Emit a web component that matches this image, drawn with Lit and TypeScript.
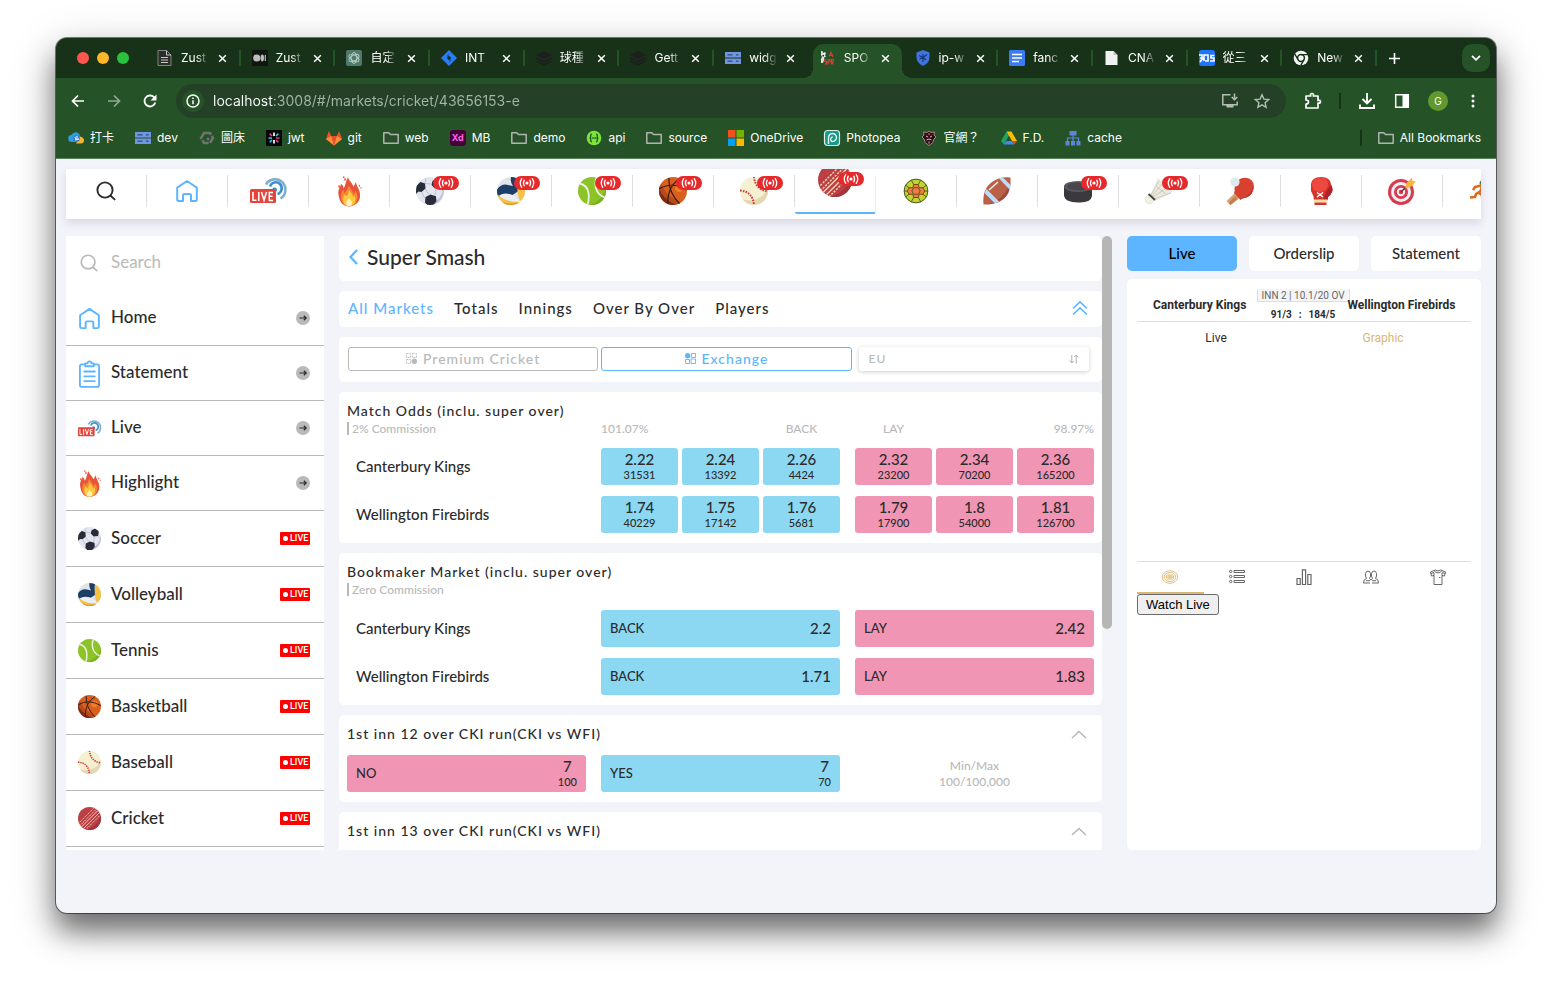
import { LitElement, html, css, svg, nothing } from "lit";
import { customElement } from "lit/decorators.js";
import { classMap } from "lit/directives/class-map.js";

/* ---------- icon artwork ---------- */

const icon = (box: string, body: unknown) => html`<svg viewBox=${box} aria-hidden="true">${body}</svg>`;

const clipBall = (id: string, body: unknown) => svg`
  <clipPath id=${id}><circle cx="14" cy="14" r="14"/></clipPath>
  <g clip-path="url(#${id})">${body}</g>`;

const sportArt: Record<string, () => unknown> = {
  search: () => icon("0 0 20 20", svg`<g fill="none" stroke="currentColor" stroke-width="1.9" stroke-linecap="round">
    <circle cx="9" cy="9" r="7.6"/><path d="M14.6 14.8l4 3.6"/></g>`),
  home: () => icon("0 0 24 24", svg`<path fill="none" stroke="#5eb5ff" stroke-width="2" stroke-linejoin="round"
    d="M2.2 8.6L12 2l9.800 6.600V20.500q0 1.500-1.500 1.500h-4.300v-5.500q0-1.500-1.500-1.500h-5q-1.500 0-1.500 1.500V22H3.700q-1.500 0-1.500-1.500z"/>`),
  statement: () => icon("0 0 24 30", svg`<g fill="none" stroke="#5eb5ff" stroke-width="1.9" stroke-linecap="round" stroke-linejoin="round">
    <path d="M7 4.500H4q-2 0-2 2V26q0 2 2 2h16q2 0 2-2V6.500q0-2-2-2h-3"/><path d="M7.500 6.500v-3h2.500a2 2 0 0 1 4 0h2.500v3z"/>
    <path d="M6.500 12h11M6.500 17h11M6.500 22h11"/></g>`),
  live: () => icon("0 0 36 26", svg`<g fill="none" stroke-width="2.600" stroke-linecap="butt">
    <path stroke="#7fb0cd" d="M16 6.500A10.400 10.400 0 1 1 30.500 20.500"/>
    <path stroke="#3f8fd0" d="M20 8.500A6 6 0 1 1 27.500 16"/></g><circle cx="24.600" cy="12" r="2.400" fill="#3f8fd0"/>
    <rect x="0" y="11" width="26" height="14" rx="1.500" fill="#e5443a"/>
    <g fill="none" stroke="#fff" stroke-width="1.500"><path d="M3 14v8.300h3.500M8.800 14v9M11.500 14l2.500 8.300L16.500 14M23 14.500h-3.700v8h3.700M19.300 18.200h3.200"/></g>`),
  fire: () => icon("0 0 26 31", svg`<path fill="#e8543a" d="M3 21C1 14 4 12 5 8c2 1 2.500 3 2.500 4.500C10 9 9.500 5 12 1c.5 4 4 5 5.500 9.500C19 9 19 7 20 6c0 4 5 8 4 15-1 6-6 9.500-11 9.500S4 27 3 21z"/>
    <path fill="#f58a35" d="M5 22c-.500-4 1-6 2-8 1 1 1.500 2 1.500 3.500 2-2 3-5 4.500-8 1 4 4 5 4.500 9 1-1 1.500-2 2-3.500 2 3 2.500 6 1.500 9-1 4-4 6-8 6s-7.500-3-8-8z"/>
    <path fill="#fdc93c" d="M7 24c0-3 1-4 2-5.500l1.500 2C12 19 12.500 17 13 14c2 3 3.500 4 4 7l1.500-1.500c1 2 1 3 .8 4.500-.5 4-3 6-6.300 6s-5.700-2-6-6z"/>
    <path fill="#fff3b8" d="M10 27c0-2 2-2.500 3-5 1.500 2.500 3 3 3 5s-1 3-3 3-3-1-3-3z"/>
    <path fill="#e8543a" d="M2 10l1.500-1 .5 2-1 1zM8 3l1.300-1.300.7 2L8.700 5zM22.500 9.500l1-1 .7 1.500-1 1zM7 .5h1.500V2H7zM24.500 11h1v1.500h-1z"/>`),
  soccer: () => icon("0 0 28 28", clipBall("so", svg`<rect width="28" height="28" fill="#e3e5ef"/>
    <path fill="#c3c7d8" d="M28 9v19H8c11 0 18-7 20-19z"/>
    <path fill="#262c38" d="M16.500 4l4.500-2.200 4.500 3.200-1 6-5.500.5-3.500-3.500zM0 9l4.500-4 4.500 1.500.5 5-4 3.500-3-.5L0 17zM9.500 20l5-2.500 5.500 1.800.5 5-4 4.700h-4.500l-3-3.500z"/>
    <path fill="none" stroke="#b4b9cb" stroke-width=".8" d="M9 6.500L16 7M9 12l4 5.500M20 11.500l-1 7M24.500 11l3 4M5.500 15l3 6M20.500 24l4-2M9 6l1-5"/>`)),
  volleyball: () => icon("0 0 28 28", clipBall("vo", svg`<rect width="28" height="28" fill="#dfe3ea"/>
    <path fill="#1d3e66" d="M14 0h7q-1.500 6 .5 14l-6 4Q10 16 1 20L-1 14q5-8 12-6l5 1Q13 5 14 0z"/>
    <path fill="#f7c244" d="M21 0l8 4v16l-6 4q-4-8-2-24zM1 18q8 7 21 7l1 5H0z"/>
    <path fill="#eceef2" d="M2 18.500q6-3.500 13-.5 6 2.500 7.500 6.500Q9 25 2 18.500z"/>
    <path fill="#d99d2d" d="M5 25q9 3 16 .3l1 3.300H7z"/>`)),
  tennis: () => icon("0 0 28 28", clipBall("te", svg`<rect width="28" height="28" fill="#8cc327"/>
    <path fill="#7bb01f" d="M28 8v20H10c10-2 17-9 18-20z"/>
    <g fill="none" stroke="#eef0e2" stroke-width="1.800"><path d="M1 6.500q8 1 9.500 9.500.8 6-1 12"/><path d="M19.500-1q-4 7-.5 15 3.500 6 9 6.500"/></g>`)),
  basketball: () => icon("0 0 28 28", clipBall("ba", svg`<rect width="28" height="28" fill="#d9601c"/>
    <path fill="#7d2c1c" d="M0 8q3 11 10 15 5 3 8 6H0z"/><path fill="#b64a1b" d="M2 6q4 11 12 15 6 3 8 6l-5 1Q4 22 0 12z"/>
    <circle cx="20" cy="11" r="4" fill="#ee7e27"/>
    <g fill="none" stroke="#3a1c14" stroke-width="1.200"><path d="M0 12Q13 4 28 13M10 1q-1 14 11 26M22 1Q8 9 9 27"/></g>`)),
  baseball: () => icon("0 0 28 28", clipBall("bb", svg`<rect width="28" height="28" fill="#f6f0d2"/>
    <path fill="#e2d9b3" d="M28 10v18H0v-6q22 5 28-12z"/>
    <g fill="none" stroke="#cf3a3c" stroke-width="2" stroke-dasharray="1.600 1.200"><path d="M0 13.500q13 1 14 15"/><path d="M14-.500q1 13 14 15"/></g>`)),
  cricket: () => icon("0 0 28 28", clipBall("cr", svg`<rect width="28" height="28" fill="#ba4045"/>
    <path fill="#a5343a" d="M28 8v20H8q17-3 20-20z"/>
    <g stroke="#f3cfae" stroke-width="1.200"><path d="M4 24.500L24.500 4M6.500 26.500L26.500 6.500"/>
    <path stroke-dasharray="1.800 1" d="M0 20.500L19.500 1M2 23L22.500 2.500M9 28L28 9"/></g>`)),
  handball: () => icon("0 0 28 28", svg`<circle cx="14" cy="14" r="12.800" fill="#c3d42e" stroke="#3c4a1c" stroke-width="1"/>
    <path fill="#f47c43" stroke="#5c3a1c" stroke-width=".9" d="M11.500 7h5l1 3.500h4l2 3.500-2 3.500h-4l-1 3.500h-5l-1-3.500h-4L4.500 14l2-3.500h4z"/>
    <path fill="none" stroke="#3c4a1c" stroke-width=".9" d="M11.500 10.500h5l2 3.500-2 3.500h-5l-2-3.500zM11.500 7L9 2.500M16.500 7L19 2.500M21.500 10.500l4-3M23.500 14h3.300M21.500 17.500l4 3M16.500 21l2.500 4.500M11.500 21L9 25.500M6.500 17.500l-4 3M4.500 14H1.200M6.500 10.500l-4-3"/>`),
  football: () => icon("0 0 28 28", svg`<path fill="#b96048" d="M.5 27.500Q-1 12 9 5 17-1 27.500.500 29 12 20 20 12 28 .5 27.500z"/>
    <path fill="#9c4b3a" d="M1 27.500q17-1 26.500-21-1 21-26.500 21z"/>
    <path fill="#b9ddfa" d="M1.500 16l2-4L16 24.500l-4 2zM16 1.500l4-1L28 8.500l-1.500 4z"/>
    <path stroke="#e9eef4" stroke-width="1.500" d="M6 13L15 5"/>`),
  puck: () => icon("0 0 28 28", svg`<path fill="#3b383e" d="M0 9v10q1 6 14 6.500T28 19V9z"/><ellipse cx="14" cy="9.500" rx="14" ry="5.500" fill="#5a565e"/>
    <ellipse cx="14" cy="9.500" rx="11" ry="3.800" fill="#49454d"/>`),
  shuttle: () => icon("0 0 28 28", svg`<path fill="#eceadf" d="M5 18L13 1l3 3 1.500-2 1 5 5-1-.5 4 5-.5-2 4 2 .5-2 2-16 8z"/>
    <path fill="none" stroke="#c5c2b4" stroke-width=".8" d="M6 18l8-14M7 19L18 6M8 20l15-10M9 22l17-6M12 10l9 7"/>
    <circle cx="4.500" cy="22.500" r="4.200" fill="#f3f1e4" stroke="#d7d3bf" stroke-width=".6"/><path stroke="#424242" stroke-width="1.800" d="M3.500 17l6.500 6"/>`),
  pingpong: () => icon("0 0 28 28", svg`<path fill="#d9a273" d="M9 16l4.500 5-9 7L.500 24z"/><path fill="#be8254" d="M9 19l2.500 3.500L4.500 28l-2-2z"/>
    <path fill="#d8402f" d="M10 5Q16-1 23 1.500q6 3 4.500 10.500-2 8-9 9-3 .500-4 2L8 16q1-2 .5-5z"/><path fill="#b5302a" d="M27.500 8q-1 11-13 13.500l-.5 1.500 1.500-1.500q10-1 12-9.500z"/>
    <circle cx="9" cy="5" r="4.600" fill="#dfe9ed"/>`),
  boxing: () => icon("0 0 28 28", svg`<path fill="#d8322d" d="M4 7Q5 0 14 0t10 7l1 3q2 5-4 10l-.5 3H7q0-4-3-9z"/>
    <path fill="#ec4a40" d="M5 8q0-7 9-7 7 0 7 6-1 8-8 8-7 0-8-7z"/><path fill="#ae2227" d="M24 8l1 2q2 5-4 10l-.5 3h-4q1-7 7.500-15z"/>
    <path stroke="#fff" stroke-width="1.500" d="M10 15.500l6 4.500M16 15.500L10 20"/><path fill="#f6e0a4" d="M7 22.500h13.500v3H7z"/><path fill="#d8322d" d="M7.500 25.500h12V28h-12z"/>`),
  darts: () => icon("0 0 28 28", svg`<circle cx="13" cy="15" r="13" fill="#d83b4f"/><circle cx="13" cy="15" r="10" fill="#f2eef3"/>
    <circle cx="13" cy="15" r="7" fill="#d83b4f"/><circle cx="13" cy="15" r="4.200" fill="#f2eef3"/><circle cx="13" cy="15" r="2.200" fill="#d83b4f"/>
    <path stroke="#5b3b3b" stroke-width="1.200" d="M13 15l6-6"/><path fill="#f5b43c" d="M17 11.500L18.500 6 24 .500l.5 3.500 3.500.5L22.500 10z"/>`),
  runner: () => icon("0 0 28 28", svg`<circle cx="13" cy="6" r="2.500" fill="#3a7d4e"/><path fill="none" stroke="#e06a1c" stroke-width="2.600" stroke-linejoin="round"
    d="M12 8.500l-6 1.500-2 3M12 8.500q1.500 3-1 6l-4 2.500-1 3-5 .5M10 16l3 2 .5 5"/>`),
};

const broadcast = () => icon("0 0 20 12", svg`<circle cx="10" cy="6" r="2" fill="#fff"/>
  <g fill="none" stroke="#fff" stroke-width="1.600" stroke-linecap="round"><path d="M6.600 2.500q-2.200 3.500 0 7M13.400 2.500q2.200 3.500 0 7M3.400.5q-3.600 5.500 0 11M16.600.5q3.600 5.500 0 11"/></g>`);

const folder = () => icon("0 0 16 16", svg`<path fill="none" stroke="#b3b3b3" stroke-width="1.500" stroke-linejoin="round" d="M.8 13.300V2.800h5L7.500 4.500h7.700v8.800z"/>`);
const server = () => icon("0 0 16 16", svg`<path fill="#7096e0" d="M0 2h16v5.600H0zM0 8.400h16V14H0z"/><path stroke="#2b4c86" stroke-width="1.300" d="M2.500 4.800h5M2.500 11.200h5M11 4.800h2.500M11 11.200h2.500"/>`);
const layers = () => icon("0 0 16 16", svg`<path fill="#1c1f1d" d="M8 1l8 4-8 4-8-4z"/><path fill="none" stroke="#1c1f1d" stroke-width="1.800" d="M.5 8L8 11.800 15.500 8M.5 11L8 14.800 15.500 11"/>`);

const tabArt: Record<string, () => unknown> = {
  doc: () => icon("0 0 16 16", svg`<path fill="#2a2f2b" stroke="#8d8d8d" stroke-width=".9" d="M1 .500h8.500L14 5v10.500H1z"/><path fill="none" stroke="#c9c9c9" d="M9.500.500V5H14M4 7.500h7M4 10h7M4 12.500h7"/>`),
  medium: () => icon("0 0 16 16", svg`<rect width="16" height="16" rx="1" fill="#10150f"/><circle cx="4.800" cy="8" r="3.600" fill="#b9beb8"/><ellipse cx="10.300" cy="8" rx="1.700" ry="3.400" fill="#b9beb8"/><rect x="12.700" y="5" width="1.200" height="6" fill="#b9beb8"/>`),
  gpt: () => icon("0 0 16 16", svg`<rect width="16" height="16" rx="2" fill="#4f7a6b"/><g fill="none" stroke="#b9cfc6" stroke-width=".9"><ellipse cx="8" cy="8" rx="2.800" ry="5.500"/><ellipse cx="8" cy="8" rx="2.800" ry="5.500" transform="rotate(60 8 8)"/><ellipse cx="8" cy="8" rx="2.800" ry="5.500" transform="rotate(120 8 8)"/></g>`),
  jira: () => icon("0 0 16 16", svg`<path fill="#2a7df5" d="M8 0l8 8-8 8-8-8z"/><path fill="#1a5fd0" d="M8 3l-3 3 3 2.500V5.800zM8 13l3-3-3-2v2.200z"/><path fill="#183219" d="M8 5.800L10.200 8 8 10.200 5.800 8z"/>`),
  layers, server,
  spo: () => icon("0 0 16 16", svg`<path fill="#dfe5df" d="M1 1h1.500l.5 2 2-1 1 1.500-1 2 1.500 1-2 .5-.5 3L3 13H1V9l1-2-1-2z"/><path fill="#242c24" d="M2.500 5H4v1.500H2.500z"/><path fill="none" stroke="#e2392d" stroke-width="1.200" d="M9 6.500l2-4 2 4.500M9.500 5.500h3M6.500 9.500H4.800v2h1.700V14H4.500M8 14.500v-5h2v2.300H8M11.500 14.500v-5h1.800v2.200l-1.500.3 1.700 2.500"/>`),
  shield: () => icon("0 0 16 16", svg`<path fill="#3f73dd" d="M8 0l6.500 2.500V7q0 6-6.500 9-6.500-3-6.500-9V2.500z"/><path fill="none" stroke="#16357c" stroke-width="1.100" d="M4 5.500l4 2 4-3M4.500 9L8 7.500 11 10M8 4v8"/>`),
  gdoc: () => icon("0 0 16 16", svg`<rect width="16" height="16" rx="1.500" fill="#3b7bf6"/><path stroke="#fff" stroke-width="1.600" d="M3 4.500h10M3 8h10M3 11.500h7"/>`),
  page: () => icon("0 0 16 16", svg`<path fill="#f1f1f1" d="M1.500 1h8l4 4v10h-12z"/><path fill="#bdbdbd" d="M9.500 1l4 4h-4z"/>`),
  pic: () => icon("0 0 16 16", svg`<rect width="16" height="16" rx="2.500" fill="#1e74fa"/><path fill="none" stroke="#fff" stroke-width="1.600" d="M0 5h3v3H1M5 11V5h4v6H6M15.500 5.500H12V8h3v3h-4M1 12l3-4"/>`),
  chrome: () => icon("0 0 16 16", svg`<circle cx="8" cy="8" r="7.300" fill="#f5f5f5"/><circle cx="8" cy="8" r="3.400" fill="none" stroke="#183219" stroke-width="1.500"/><path stroke="#183219" stroke-width="1.400" d="M8 4.600h7M5 9.700L1.800 4M11 9.700L7.800 15.300"/>`),
};

const markArt: Record<string, () => unknown> = {
  cloud: () => icon("0 0 16 16", svg`<path fill="#2aa0e8" d="M4 12a3.500 3.500 0 0 1-.5-7Q6 1 10 3q2 1 2 4l-2 5z"/><path fill="#f6b62e" d="M8 13.500l4-7q3.500.500 4 3.500 0 3.500-3.500 3.500z"/><circle cx="8.500" cy="8.500" r="3.300" fill="#3678c9"/><path fill="none" stroke="#fff" d="M10 7.200q-3-1-3 .5t3 1.300-3 1"/>`),
  server, folder,
  hex: () => icon("0 0 16 16", svg`<path fill="none" stroke="#6d736d" stroke-width="2.600" d="M5 3h6l3 5-3 5H5L2 8z" stroke-dasharray="8 1.500"/><circle cx="9" cy="9" r="1.500" fill="#6d736d"/>`),
  jwt: () => icon("0 0 16 16", svg`<rect width="16" height="16" fill="#060606"/><g stroke-width="1.700"><path stroke="#fff" d="M8 2.500V6M8 10v3.500"/><path stroke="#31c3e8" d="M10 6l2.300-2.300M6 10l-2.300 2.300M2.500 8H6"/><path stroke="#e0338c" d="M10 8h3.500M10 10l2.300 2.300M6 6L3.700 3.700"/></g>`),
  gitlab: () => icon("0 0 16 16", svg`<path fill="#e8512c" d="M0 9l2.800-8L5.300 6h5.400l2.500-5L16 9l-8 6.500z"/><path fill="#f79336" d="M0 9l5.300-3L8 15.500zM16 9l-5.300-3L8 15.500z"/><path fill="#e8512c" d="M5.300 6h5.400L8 15.500z"/>`),
  xd: () => html`<span class="xd">Xd</span>`,
  api: () => icon("0 0 16 16", svg`<circle cx="8" cy="8" r="7.300" fill="#7be33a"/><g fill="none" stroke="#17451f" stroke-width="1.200"><path d="M6 4Q4.500 4 4.800 6 5 8 3.500 8 5 8 4.800 10 4.500 12 6 12M10 4q1.500 0 1.200 2Q11 8 12.500 8 11 8 11.200 10q.3 2-1.200 2M6 8h4.500"/></g>`),
  ms: () => icon("0 0 16 16", svg`<path fill="#f1511b" d="M0 0h7.500v7.500H0z"/><path fill="#73b200" d="M8.500 0H16v7.500H8.500z"/><path fill="#05a0f0" d="M0 8.500h7.500V16H0z"/><path fill="#fdb900" d="M8.500 8.500H16V16H8.500z"/>`),
  pea: () => icon("0 0 16 16", svg`<rect x=".5" y=".5" width="15" height="15" rx="3" fill="#159a86" stroke="#dcefe9" stroke-width="1.200"/><path fill="none" stroke="#e6f5f1" stroke-width="1.400" d="M4.500 14V8a4 4 0 1 1 4 3.500q-2 0-1.800-2.500Q7 7 8.800 7"/>`),
  crest: () => icon("0 0 16 16", svg`<path fill="#2a1216" stroke="#c4989b" stroke-width=".8" d="M8 1l2 1.500 3.500-.5-.5 3 2 2-2 2q0 4-5 6.500Q3 13 3 9L1 7l2-2-.5-3L6 2.500z"/><path fill="none" stroke="#d9b6b8" d="M5 6l2 1M11 6L9 7M5.500 10q2.500-2 5 0M8 11.500v2"/><path fill="#b92d3a" d="M7 3h2v2H7z"/>`),
  drive: () => icon("0 0 16 16", svg`<path fill="#1fa463" d="M5.500 1.500L0 11l2.700 3.500L8 5.500z"/><path fill="#fbbc04" d="M5.500 1.500h5L16 11h-5z"/><path fill="#4285f4" d="M5 11l-2.300 3.500h10.600L11 11z"/><path fill="#ea4335" d="M11 11h5l-2.700 3.500z"/>`),
  tree: () => icon("0 0 16 16", svg`<path fill="#5b86dd" d="M4.500 1h7v4.500h-7zM.5 11h4v4.500h-4zM6 11h4v4.500H6zM11.500 11h4v4.500h-4z"/><path fill="none" stroke="#5b86dd" stroke-width="1.200" d="M8 5v6M2.500 11V8h11v3"/>`),
};

const closeX = () => icon("0 0 10 10", svg`<path stroke="#fff" stroke-width="1.700" d="M1.300 1.300l7.400 7.400M8.700 1.300L1.300 8.700"/>`);
const chevUp = () => icon("0 0 16 9", svg`<path fill="none" stroke="#b8b8b8" stroke-width="1.500" d="M1 8l7-6.500L15 8"/>`);

/* ---------- shared styles ---------- */

const base = css`
  :host, *, *::before, *::after { box-sizing: border-box; }
  :host { display: block; font-family: Lato, "Open Sans", sans-serif; color: #2b2b2b; }
  button, input, select { font: inherit; letter-spacing: inherit; color: inherit; border: 0; background: none; padding: 0; margin: 0; }
  a { color: inherit; text-decoration: none; }
  svg { display: block; width: 100%; height: 100%; overflow: visible; }
  h1, h2, p, ul { margin: 0; padding: 0; font-weight: inherit; list-style: none; }
`;

/* ---------- browser frame ---------- */

@customElement("browser-bar")
class BrowserBar extends LitElement {
  static styles = [base, css`
    :host { font-family: Inter, "Noto Sans CJK TC", sans-serif; font-size: 12px; color: #fff; background: #255227; border-bottom: 1px solid #5c845d; }
    .strip { display: flex; align-items: stretch; height: 40px; background: #183219; }
    .lights { display: flex; align-items: center; gap: 8px; width: 90px; padding-left: 21px; }
    .light { width: 12px; height: 12px; border-radius: 50%; }
    .red { background: #ff5750; } .amber { background: #fdb72b; } .green { background: #28c23c; }
    .tabs { flex: 1; display: flex; min-width: 0; }
    .tab { flex: 1 1 0; min-width: 0; display: flex; align-items: center; padding-left: 11px; position: relative; }
    .tab::after { content: ""; position: absolute; right: 0; top: 12px; width: 2px; height: 16px; background: #255227; }
    .tab.pre::after { display: none; }
    .tab.on::before { content: ""; position: absolute; inset: 6px 2px 0 4px; background: #255227; border-radius: 10px 10px 0 0; }
    .tab.on::after { inset: auto -8px 0 -6px; width: auto; height: 10px;
      background: radial-gradient(circle at 0 0, transparent 10px, #255227 10px) left / 10px 10px no-repeat,
        radial-gradient(circle at 100% 0, transparent 10px, #255227 10px) right / 10px 10px no-repeat; }
    .fav { flex: none; width: 16px; height: 16px; position: relative; }
    .name { flex: none; width: 30px; margin-left: 8px; line-height: 18px; white-space: nowrap; position: relative;
      mask-image: linear-gradient(90deg, #000 50%, transparent 95%); }
    .x { flex: none; width: 9px; height: 9px; margin-left: 7px; position: relative; }
    .plus { width: 34px; display: grid; place-items: center; }
    .plus svg { width: 11px; height: 11px; }
    .end { width: 85px; display: flex; justify-content: flex-end; align-items: center; padding-right: 6px; }
    .down { width: 28px; height: 28px; border-radius: 10px; background: #255227; display: grid; place-items: center; }
    .down svg { width: 10px; height: 6px; }
    .tools { display: flex; align-items: center; padding: 6px 15px 0 14px; }
    .tool { width: 16px; height: 16px; margin-right: 20px; }
    .dim { opacity: .5; }
    .omni { flex: 1; display: flex; align-items: center; height: 34px; border-radius: 17px; background: #244026; padding: 0 16px 0 6px; margin: 0 18px 0 -2px; }
    .info { width: 22px; height: 22px; border-radius: 50%; background: #255227; padding: 4px; margin-right: 9px; }
    .url { flex: 1; min-width: 0; font-size: 14px; line-height: 20px; color: transparent;
      background: linear-gradient(90deg, #fff 60px, #a5b5a6 60px); -webkit-background-clip: text; background-clip: text; }
    .omni .act { width: 16px; height: 16px; margin-left: 16px; }
    .sep { width: 2px; height: 16px; background: #183219; }
    .g { width: 20px; height: 20px; border-radius: 50%; background: #63982f; display: grid; place-items: center; font-size: 10px; }
    .right { display: flex; align-items: center; gap: 17px; }
    .right .ic { width: 18px; height: 18px; }
    .right .dots { width: 16px; height: 16px; }
    .marks { display: flex; align-items: center; height: 40px; padding: 0 15px 0 12px; gap: 21px; }
    .mark { display: flex; align-items: center; gap: 6px; white-space: nowrap; line-height: 16px; }
    .mi { width: 16px; height: 16px; }
    .xd { display: grid; place-items: center; width: 16px; height: 16px; border-radius: 3px; background: #450135; color: #ff61f6; font-size: 9px; font-weight: 700; }
    .all { margin-left: auto; display: flex; align-items: center; gap: 16px; }
  `];

  tabs = [["doc", "Zust"], ["medium", "Zust"], ["gpt", "自定"], ["jira", "INT"], ["layers", "球種"], ["layers", "Gett"],
    ["server", "widg"], ["spo", "SPO"], ["shield", "ip-w"], ["gdoc", "fanc"], ["page", "CNA"], ["pic", "從三"], ["chrome", "New"]];
  marks = [["cloud", "打卡"], ["server", "dev"], ["hex", "圖床"], ["jwt", "jwt"], ["gitlab", "git"], ["folder", "web"], ["xd", "MB"], ["folder", "demo"],
    ["api", "api"], ["folder", "source"], ["ms", "OneDrive"], ["pea", "Photopea"], ["crest", "官網？"], ["drive", "F.D."], ["tree", "cache"]];

  render() {
    return html`
      <div class="strip">
        <div class="lights"><span class="light red"></span><span class="light amber"></span><span class="light green"></span></div>
        <div class="tabs">${this.tabs.map(([i, t], n) => html`
          <div class=${classMap({ tab: true, on: n === 7, pre: n === 6 })}>
            <span class="fav">${tabArt[i]()}</span><span class="name">${t}</span><button class="x" aria-label="Close tab">${closeX()}</button>
          </div>`)}</div>
        <button class="plus" aria-label="New tab">${icon("0 0 11 11", svg`<path stroke="#fff" stroke-width="1.600" d="M5.500 0v11M0 5.500h11"/>`)}</button>
        <div class="end"><button class="down" aria-label="Search tabs">${icon("0 0 10 6", svg`<path fill="none" stroke="#fff" stroke-width="1.800" d="M1 .8l4 4 4-4"/>`)}</button></div>
      </div>
      <div class="tools">
        <button class="tool" aria-label="Back">${icon("0 0 16 16", svg`<path fill="none" stroke="#fff" stroke-width="1.700" d="M14 8H3M8 2.500L2.500 8 8 13.500"/>`)}</button>
        <button class="tool dim" aria-label="Forward">${icon("0 0 16 16", svg`<path fill="none" stroke="#fff" stroke-width="1.700" d="M2 8h11M8 2.500L13.500 8 8 13.500"/>`)}</button>
        <button class="tool" aria-label="Reload">${icon("0 0 16 16", svg`<path fill="none" stroke="#fff" stroke-width="1.800" d="M13.300 9.500A5.500 5.500 0 1 1 12 4.200L13.600 6"/><path fill="#fff" d="M14.500 1.500v6h-6z"/>`)}</button>
        <div class="omni">
          <span class="info">${icon("0 0 14 14", svg`<circle cx="7" cy="7" r="6" fill="none" stroke="#fff" stroke-width="1.500"/><path stroke="#fff" stroke-width="1.500" d="M7 6.200v4M7 3.500V5"/>`)}</span>
          <input class="url" aria-label="Address" value="localhost:3008/#/markets/cricket/43656153-e">
          <button class="act" aria-label="Install">${icon("0 0 16 16", svg`<g fill="none" stroke="#b3bdb3" stroke-width="1.500"><path d="M8.500 1.800H.8v9.900h14.400V8.500M12.500.5v6M9.700 4l2.800 2.800L15.300 4"/></g><path fill="#b3bdb3" d="M4.500 12h7v2.500h-7z"/>`)}</button>
          <button class="act" aria-label="Bookmark">${icon("0 0 16 16", svg`<path fill="none" stroke="#b3bdb3" stroke-width="1.400" d="M8 1.700l1.900 4.400 4.800.4-3.600 3.200 1 4.700L8 11.900l-4.100 2.500 1-4.700L1.300 6.500l4.800-.4z"/>`)}</button>
        </div>
        <div class="right">
          <button class="ic" aria-label="Extensions">${icon("0 0 18 18", svg`<path fill="none" stroke="#fff" stroke-width="1.700" stroke-linejoin="round" d="M2 4h4.700q-.7-2.500 1.300-2.500T9.300 4H14v4.500q2.500-.5 2.500 1.300T14 11v5H2v-4q2.500 0 2.500-2T2 8z"/>`)}</button>
          <span class="sep"></span>
          <button class="ic" aria-label="Downloads">${icon("0 0 18 18", svg`<path fill="none" stroke="#fff" stroke-width="1.900" d="M9 1v10M4.500 7L9 11.500 13.500 7M2 12.500V16h14v-3.500"/>`)}</button>
          <button class="ic" aria-label="Side panel">${icon("0 0 18 18", svg`<path fill="none" stroke="#fff" stroke-width="1.500" d="M2.700 2.700h12.600v12.600H2.700z"/><path fill="#fff" d="M9.500 2.500h6v13h-6z"/>`)}</button>
          <button class="g" aria-label="Profile">G</button>
          <button class="dots" aria-label="Menu">${icon("0 0 16 16", svg`<g fill="#fff"><circle cx="8" cy="3" r="1.500"/><circle cx="8" cy="8" r="1.500"/><circle cx="8" cy="13" r="1.500"/></g>`)}</button>
        </div>
      </div>
      <div class="marks">
        ${this.marks.map(([i, t]) => html`<a class="mark" href="#"><span class="mi">${markArt[i]()}</span>${t}</a>`)}
        <div class="all"><span class="sep"></span><a class="mark" href="#"><span class="mi">${folder()}</span>All Bookmarks</a></div>
      </div>`;
  }
}

/* ---------- sport strip ---------- */

@customElement("sport-strip")
class SportStrip extends LitElement {
  static styles = [base, css`
    :host { background: #fff; box-shadow: 0 4px 8px rgba(60, 60, 90, .15); }
    nav { display: flex; height: 50px; padding-top: 6px; overflow: hidden; }
    .cell { flex: none; width: 81px; height: 32px; border-right: 1px solid #dedee2; display: grid; place-items: center; }
    .art { position: relative; width: 28px; height: 28px; }
    .search { width: 20px; height: 20px; }
    .home { width: 24px; height: 24px; }
    .live { width: 36px; height: 26px; }
    .fire { width: 26px; height: 31px; }
    .handball { width: 26px; height: 26px; }
    .on { height: 39px; border-right-color: #ececf0; border-bottom: 2px solid #5eb5ff; border-radius: 2px; align-items: start; }
    .on .art { width: 34px; height: 34px; margin-top: -12px; }
    .pill { position: absolute; left: 17px; top: -1px; width: 26px; height: 14px; padding: 2px 5px; border-radius: 7px; background: #e62a2c; }
    .on .pill { left: 20px; top: 9px; }
  `];
  cells: [string, boolean?][] = [["search"], ["home"], ["live"], ["fire"], ["soccer", true], ["volleyball", true], ["tennis", true], ["basketball", true],
    ["baseball", true], ["cricket", true], ["handball"], ["football"], ["puck", true], ["shuttle", true], ["pingpong"], ["boxing"], ["darts"], ["runner"]];
  render() {
    return html`<nav>${this.cells.map(([k, live]) => html`
      <a class=${classMap({ cell: true, on: k === "cricket" })} href="#" aria-label=${k}>
        <span class="art ${k}">${sportArt[k]()}${live ? html`<span class="pill">${broadcast()}</span>` : nothing}</span></a>`)}</nav>`;
  }
}

/* ---------- left menu ---------- */

@customElement("side-menu")
class SideMenu extends LitElement {
  static styles = [base, css`
    :host { background: #fff; overflow: hidden; font-size: 17px; }
    .find { display: flex; align-items: center; height: 55px; padding: 0 14px 2px; color: #b9b9b9; }
    .find .lens { width: 18px; height: 18px; margin-right: 13px; }
    .find input { flex: 1; min-width: 0; outline: 0; padding-bottom: 2px; }
    .find input::placeholder { color: #b9b9b9; opacity: 1; }
    .row { display: flex; align-items: center; height: 55px; padding: 0 14px 0 12px; border-bottom: 1px solid #bababa; }
    .sport { height: 56px; }
    .art { width: 23px; height: 26px; margin-right: 10px; display: grid; }
    .home, .sport .art { height: 23px; }
    .live { height: 17px; }
    .label { flex: 1; padding-bottom: 3px; font-weight: 500; }
    .go { width: 14px; height: 14px; }
    .tag { display: flex; align-items: center; gap: 2px; width: 30px; height: 13px; padding: 0 3px; background: #fe0000; color: #fff;
      font: 500 9px/13px Roboto, sans-serif; border-radius: 1px; }
    .tag::before { content: ""; flex: none; width: 5px; height: 5px; border-radius: 50%; background: #fff; }
  `];
  render() {
    const top = [["home", "Home"], ["statement", "Statement"], ["live", "Live"], ["fire", "Highlight"]];
    const sports = ["Soccer", "Volleyball", "Tennis", "Basketball", "Baseball", "Cricket"];
    return html`
      <label class="find"><span class="lens">${sportArt.search()}</span><input type="text" placeholder="Search" aria-label="Search"></label>
      ${top.map(([k, t]) => html`<a class="row" href="#"><span class="art ${k}">${sportArt[k]()}</span><span class="label">${t}</span>
        <span class="go">${icon("0 0 14 14", svg`<circle cx="7" cy="7" r="7" fill="#b9b9b9"/><path fill="none" stroke="#2b2b2b" stroke-width="1.200" d="M3.500 7h6.500M7.800 4.700L10.200 7 7.800 9.300"/>`)}</span></a>`)}
      ${sports.map((t) => html`<a class="row sport" href="#"><span class="art">${sportArt[t.toLowerCase()]()}</span><span class="label">${t}</span><span class="tag">LIVE</span></a>`)}`;
  }
}

/* ---------- markets ---------- */

@customElement("market-board")
class MarketBoard extends LitElement {
  static styles = [base, css`
    :host { display: flex; min-height: 0; font-weight: 500; }
    .list { flex: 1; min-width: 0; overflow: hidden; display: flex; flex-direction: column; gap: 10px; }
    .bar { width: 10px; height: 64%; border-radius: 5px; background: #b6b6b6; }
    .card { flex: none; background: #fff; border-radius: 5px; padding: 9px 8px 10px; }
    .head { display: flex; align-items: center; height: 45px; padding: 0 10px 4px; gap: 9px; }
    .back { width: 9px; height: 16px; }
    h1 { font-size: 21px; line-height: 24px; }
    .tabs { display: flex; align-items: center; gap: 20px; height: 36px; padding: 0 14px 2px 9px; font-size: 15px; line-height: 20px; letter-spacing: 1px; }
    .tabs .on { color: #5eb5ff; }
    .fold { width: 16px; height: 14px; margin-left: auto; }
    .modes { display: flex; align-items: center; height: 45px; padding: 0 13px 2px 9px; gap: 3px; font-size: 14px; line-height: 18px; letter-spacing: 1px; }
    .mode { flex: 250 1 0; height: 24px; display: flex; align-items: center; justify-content: center; gap: 6px; border: 1px solid #b9b9b9; border-radius: 3px; color: #b9b9b9; }
    .mode.on { border-color: #5eb5ff; color: #5eb5ff; }
    .mode svg { width: 11px; height: 11px; }
    .pick { flex: 232 1 0; position: relative; height: 24px; margin-left: 4px; border-radius: 3px; box-shadow: 0 1px 4px rgba(0, 0, 0, .2); color: #b9b9b9; font-size: 12px; }
    .pick select { width: 100%; height: 24px; padding: 0 10px; appearance: none; outline: 0; }
    .pick svg { position: absolute; right: 10px; top: 7px; width: 10px; height: 10px; pointer-events: none; }
    h2 { font-size: 14px; line-height: 20px; letter-spacing: 1px; }
    .top { display: flex; align-items: center; justify-content: space-between; }
    .top .chev { width: 16px; height: 9px; margin-right: 7px; }
    .grid { display: grid; grid-template-columns: repeat(3, minmax(0, 1fr)); column-gap: 15px; align-items: center; }
    .meta { font-size: 12px; line-height: 16px; color: #b9b9b9; align-items: start; }
    .solo { min-height: 17px; }
    .note { margin-top: 1px; border-left: 2px solid #b9b9b9; padding-left: 3px; line-height: 13px; }
    .trio { display: grid; grid-template-columns: repeat(3, minmax(0, 1fr)); gap: 4px; text-align: center; }
    .trio .last { text-align: right; }
    .trio .first { text-align: left; }
    .line { margin-top: 11px; }
    .team { padding: 0 0 2px 9px; font-size: 15px; line-height: 20px; }
    .odd { height: 37px; border-radius: 3px; background: #8cd8f2; font-size: 15px; line-height: 17px; color: #2b2b2b; }
    .odd.lay { background: #f096b4; }
    .odd small { display: block; font-size: 11px; line-height: 14px; }
    .wide { display: flex; align-items: center; justify-content: space-between; padding: 0 9px; }
    .wide .side { font-size: 13px; }
    .wide .val { text-align: center; }
    .limits { text-align: center; font-size: 12px; line-height: 16px; color: #b9b9b9; }
    .tall { min-height: 87px; }
  `];
  odd(v: string, s: string, lay: boolean) {
    return html`<button class=${classMap({ odd: true, lay })}>${v}<small>${s}</small></button>`;
  }
  wide(side: string, v: string, lay: boolean, s?: string) {
    return html`<button class=${classMap({ odd: true, wide: true, lay })}><span class="side">${side}</span><span class="val">${v}${s ? html`<small>${s}</small>` : nothing}</span></button>`;
  }
  render() {
    const odds: [string, string[][]][] = [
      ["Canterbury Kings", [["2.22", "31531"], ["2.24", "13392"], ["2.26", "4424"], ["2.32", "23200"], ["2.34", "70200"], ["2.36", "165200"]]],
      ["Wellington Firebirds", [["1.74", "40229"], ["1.75", "17142"], ["1.76", "5681"], ["1.79", "17900"], ["1.8", "54000"], ["1.81", "126700"]]],
    ];
    const book = [["Canterbury Kings", "2.2", "2.42"], ["Wellington Firebirds", "1.71", "1.83"]];
    return html`
      <div class="list">
        <header class="card head"><button class="back" aria-label="Back">${icon("0 0 9 16", svg`<path fill="none" stroke="#5eb5ff" stroke-width="2.200" d="M8 1L1.500 8 8 15"/>`)}</button><h1>Super Smash</h1></header>
        <nav class="card tabs">
          ${["All Markets", "Totals", "Innings", "Over By Over", "Players"].map((t, n) => html`<a href="#" class=${n ? "" : "on"}>${t}</a>`)}
          <button class="fold" aria-label="Collapse all">${icon("0 0 16 14", svg`<path fill="none" stroke="#5eb5ff" stroke-width="1.700" d="M1 7.500l7-6.500 7 6.500M1 13.500L8 7l7 6.500"/>`)}</button>
        </nav>
        <div class="card modes">
          <button class="mode">${icon("0 0 11 11", svg`<g fill="none" stroke="currentColor" stroke-width=".9" stroke-dasharray="2 1"><path d="M.5.5h4v4h-4zM6.500.5h4v4h-4zM.5 6.500h4v4h-4z"/></g><circle cx="8.300" cy="8.300" r="2.700" fill="currentColor"/>`)}Premium Cricket</button>
          <button class="mode on">${icon("0 0 11 11", svg`<g fill="none" stroke="currentColor" stroke-width=".9"><path d="M6.500.5h4v4h-4zM.5 6.500h4v4h-4zM6 6h4.500v4.500H6z"/></g><circle cx="2.700" cy="2.700" r="2.700" fill="currentColor"/>`)}Exchange</button>
          <div class="pick"><select aria-label="Odds format"><option>EU</option></select>${icon("0 0 10 10", svg`<path fill="none" stroke="#b0b0b0" d="M2.800 1v8L.3 6.500M7.200 9.500V1l2.500 2.500M2.800 9l2-2M7.200 1l-2 2"/>`)}</div>
        </div>
        <section class="card">
          <h2>Match Odds (inclu. super over)</h2>
          <div class="grid meta"><span class="note">2% Commission</span>
            <span class="trio"><span class="first">101.07%</span><span></span><span>BACK</span></span>
            <span class="trio"><span>LAY</span><span></span><span class="last">98.97%</span></span></div>
          ${odds.map(([team, v]) => html`<div class="grid line"><span class="team">${team}</span>
            <div class="trio">${v.slice(0, 3).map(([a, b]) => this.odd(a, b, false))}</div>
            <div class="trio">${v.slice(3).map(([a, b]) => this.odd(a, b, true))}</div></div>`)}
        </section>
        <section class="card">
          <h2>Bookmaker Market (inclu. super over)</h2>
          <div class="grid meta solo"><span class="note">Zero Commission</span></div>
          ${book.map(([team, b, l]) => html`<div class="grid line"><span class="team">${team}</span>${this.wide("BACK", b, false)}${this.wide("LAY", l, true)}</div>`)}
        </section>
        <section class="card">
          <div class="top"><h2>1st inn 12 over CKI run(CKI vs WFI)</h2><button class="chev" aria-label="Collapse">${chevUp()}</button></div>
          <div class="grid line">${this.wide("NO", "7", true, "100")}${this.wide("YES", "7", false, "70")}<p class="limits">Min/Max<br>100/100,000</p></div>
        </section>
        <section class="card tall">
          <div class="top"><h2>1st inn 13 over CKI run(CKI vs WFI)</h2><button class="chev" aria-label="Collapse">${chevUp()}</button></div>
        </section>
      </div>
      <div class="bar"></div>`;
  }
}

/* ---------- right panel ---------- */

@customElement("live-panel")
class LivePanel extends LitElement {
  static styles = [base, css`
    :host { display: flex; flex-direction: column; min-height: 0; gap: 8px; }
    .tabs { display: grid; grid-template-columns: repeat(3, 1fr); gap: 12px; }
    .tab { height: 35px; padding-bottom: 2px; border-radius: 5px; background: #fff; font-size: 15px; font-weight: 500; }
    .tab.on { background: #5eb5ff; color: #000; }
    .panel { flex: 1; background: #fff; border-radius: 5px; padding: 10px; font-family: Roboto, sans-serif; font-size: 12px; }
    .score { display: grid; grid-template-columns: minmax(0, 9fr) minmax(0, 5fr) minmax(0, 10fr); align-items: center; justify-items: center; height: 33px; padding-bottom: 1px; border-bottom: 1px solid #dedede; white-space: nowrap; }
    .score b { font-weight: 700; line-height: 16px; }
    .mid { display: flex; flex-direction: column; align-items: center; gap: 7px; padding-left: 12px; }
    .inn { padding: 0 4px; border: 1px solid #ddd; border-top-color: #f5f5f5; background: #f5f5f5; font-size: 10px; line-height: 11px; color: #666; }
    .runs { font-size: 10px; line-height: 12px; font-weight: 700; display: flex; gap: 7px; }
    .kinds { display: grid; grid-template-columns: 9fr 10fr; padding-top: 8px; line-height: 16px; text-align: center; }
    .gold { color: #d9b778; }
    .field { height: 216px; border-bottom: 1px solid #dedede; }
    .views { display: grid; grid-template-columns: repeat(5, 1fr); height: 32px; }
    .view { display: grid; place-items: center; border-bottom: 2px solid transparent; color: #666; }
    .view.on { border-color: #d9b778; color: #d9b778; }
    .view svg { width: 16px; height: 16px; }
    .watch { display: block; height: 21px; padding: 0 8px; border: 1px solid #6b6b6b; border-radius: 3px; background: #efefef; color: #000; font: 13px/19px "Liberation Sans", Arial, sans-serif; }
  `];
  views = [
    svg`<g fill="none" stroke="currentColor" stroke-width=".9"><ellipse cx="8" cy="8" rx="7.700" ry="6.300"/><ellipse cx="8" cy="8" rx="5.800" ry="4.500"/><rect x="4.500" y="6" width="7" height="4" rx="1"/><path d="M7 6v4M9 6v4M4.500 8h7"/></g>`,
    svg`<g fill="none" stroke="currentColor" stroke-width="1"><circle cx="1.700" cy="2.500" r="1.200"/><circle cx="1.700" cy="7.500" r="1.200"/><circle cx="1.700" cy="12.500" r="1.200"/><path d="M5 1.500h10.500v2H5zM5 6.500h10.500v2H5zM5 11.500h10.500v2H5z"/></g>`,
    svg`<g fill="none" stroke="currentColor" stroke-width="1.200"><path d="M1 9.500h3.200v6H1zM6.400.800h3.200v14.700H6.400zM11.800 5.500H15v10h-3.200z"/></g>`,
    svg`<g fill="none" stroke="currentColor" stroke-width="1"><path d="M3.500 9.500Q2 7 2.500 4.500 3 2 5 2t2.500 2.500Q8 7 6.500 9.500M9.500 9.500Q8 7 8.500 4.500 9 2 11 2t2.500 2.500Q14 7 12.500 9.500M3.500 9.500Q.500 10 .500 14H7M12.500 9.500q3 .500 3 4.500H9M3 11.700h4M9 11.700h4M6.500 9.500L8 11l1.500-1.500"/></g>`,
    svg`<g fill="none" stroke="currentColor" stroke-width="1"><path d="M5.500 1Q8 3 10.500 1l5 2-1 4-2.500-.500v9H4v-9L1.500 7l-1-4zM4.500 2.500Q8 5.500 11.500 2.500M4 6.500V4M12 6.500V4M.8 4.500l3.200-1M15.200 4.500l-3.200-1M9 8.500h1.500"/></g>`,
  ];
  render() {
    return html`
      <div class="tabs">${["Live", "Orderslip", "Statement"].map((t, n) => html`<button class=${classMap({ tab: true, on: !n })}>${t}</button>`)}</div>
      <section class="panel">
        <div class="score"><b>Canterbury Kings</b>
          <div class="mid"><span class="inn">INN 2 | 10.1/20 OV</span><span class="runs"><span>91/3</span><span>:</span><span>184/5</span></span></div>
          <b>Wellington Firebirds</b></div>
        <div class="kinds"><a href="#">Live</a><a class="gold" href="#">Graphic</a></div>
        <div class="field"></div>
        <div class="views">${this.views.map((v, n) => html`<button class=${classMap({ view: true, on: !n })} aria-label="View ${n + 1}">${icon("0 0 16 16", v)}</button>`)}</div>
        <button class="watch">Watch Live</button>
      </section>`;
  }
}

/* ---------- page ---------- */

@customElement("app-root")
class AppRoot extends LitElement {
  static styles = [base, css`
    :host { height: 100vh; padding: 38px 56px 74px; background: #fff; overflow: hidden; }
    .window { height: 100%; display: flex; flex-direction: column; border-radius: 11px; background: #f3f4fa;
      box-shadow: 0 0 0 1px rgba(0, 0, 0, .5), 0 18px 28px rgba(0, 0, 0, .5), 0 12px 50px rgba(0, 0, 0, .2); }
    browser-bar { flex: none; overflow: hidden; border-radius: 11px 11px 0 0; }
    main { flex: 1; min-height: 0; display: flex; flex-direction: column; gap: 17px; padding: 10px 15px 63px 10px; }
    sport-strip { flex: none; }
    .cols { flex: 1; min-height: 0; display: grid; grid-template-columns: 258px minmax(0, 1fr) 354px; grid-template-rows: minmax(0, 1fr); gap: 15px; }
  `];
  render() {
    return html`<div class="window"><browser-bar></browser-bar>
      <main><sport-strip></sport-strip>
        <div class="cols"><side-menu></side-menu><market-board></market-board><live-panel></live-panel></div></main></div>`;
  }
}
